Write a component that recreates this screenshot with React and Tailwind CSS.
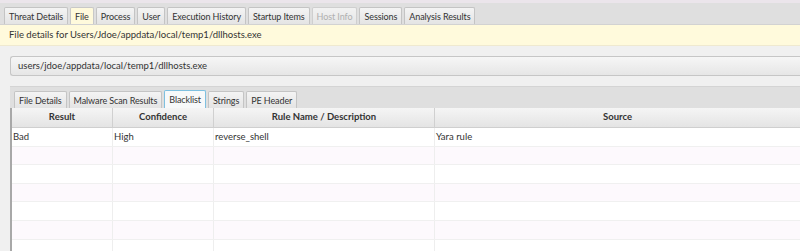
import React from "react";

const topTabs = [
  { label: "Threat Details" },
  { label: "File", selected: true },
  { label: "Process" },
  { label: "User" },
  { label: "Execution History" },
  { label: "Startup Items" },
  { label: "Host Info", disabled: true },
  { label: "Sessions" },
  { label: "Analysis Results" },
];

const innerTabs = [
  { label: "File Details" },
  { label: "Malware Scan Results" },
  { label: "Blacklist", selected: true },
  { label: "Strings" },
  { label: "PE Header" },
];

const rows = [
  ["Bad", "High", "reverse_shell", "Yara rule"],
  ["", "", "", ""],
  ["", "", "", ""],
  ["", "", "", ""],
  ["", "", "", ""],
  ["", "", "", ""],
  ["", "", "", ""],
];

function Tab({ label, selected, disabled, variant }) {
  let cls =
    "h-[17px] px-[4px] flex items-center border border-b-0 rounded-t-[2px] leading-none whitespace-nowrap text-[9px] tracking-[-0.1px] ";
  if (selected && variant === "top") {
    cls += "bg-[#fffadc] border-[#c8c8c8] text-[#333]";
  } else if (selected) {
    cls += "bg-[#f7f9fa] border-[#7ec0e0] text-[#333] h-[18px]";
  } else if (disabled) {
    cls += "bg-gradient-to-b from-[#f2f2f2] to-[#e6e6e6] border-[#cfcfcf] text-[#b0b0b0]";
  } else {
    cls += "bg-gradient-to-b from-[#f4f4f4] to-[#e4e4e4] border-[#c4c4c4] text-[#333]";
  }
  return <div className={cls}>{label}</div>;
}

export default function App() {
  return (
    <div
      className="w-[800px] h-[251px] overflow-hidden bg-[#f0f0f0] text-[9.5px] text-[#333]"
      style={{ fontFamily: "Lato, 'Noto Sans', sans-serif" }}
    >
      <div className="h-[3px] bg-[#ebe5eb]" />
      <div className="h-[22px] bg-[#dfdfdf] flex items-end gap-[2px] pl-[4px] border-b border-[#d2d2d2]">
        {topTabs.map((t) => (
          <Tab key={t.label} {...t} variant="top" />
        ))}
      </div>
      <div className="h-[21px] bg-[#fffadc] flex items-center pl-[9px] border-b border-[#efe9d0]">
        File details for Users/Jdoe/appdata/local/temp1/dllhosts.exe
      </div>
      <div className="pl-[10px] pt-[10px]">
        <div className="h-[20px] flex items-center pl-[7px] border border-r-0 border-[#c6c6c6] rounded-l-[3px] bg-gradient-to-b from-[#f6f6f6] to-[#e6e6e6]">
          users/jdoe/appdata/local/temp1/dllhosts.exe
        </div>
        <div className="mt-[10px] h-[22px] bg-[#dfdfdf] border-t border-[#d4d4d4] flex items-end gap-[2px] pl-[4px]">
          {innerTabs.map((t) => (
            <Tab key={t.label} {...t} variant="inner" />
          ))}
        </div>
        <div className="border-l-2 border-[#a8a8a8] bg-white">
          <div className="flex h-[20px] font-bold bg-gradient-to-b from-[#f5f5f5] to-[#e4e4e4] border-b border-[#cfcfcf]">
            <div className="w-[101px] flex items-center justify-center border-r border-[#d0d0d0]">Result</div>
            <div className="w-[101px] flex items-center justify-center border-r border-[#d0d0d0]">Confidence</div>
            <div className="w-[221px] flex items-center justify-center border-r border-[#d0d0d0]">Rule Name / Description</div>
            <div className="flex-1 flex items-center justify-center">Source</div>
          </div>
          {rows.map((r, i) => (
            <div
              key={i}
              className={
                "flex h-[18.6px] border-b border-[#f0f0f0] " +
                (i % 2 === 0 ? "bg-white" : "bg-[#fdf9fd]")
              }
            >
              <div className="w-[101px] flex items-center pl-[1px] border-r border-[#eeeeee]">{r[0]}</div>
              <div className="w-[101px] flex items-center pl-[1px] border-r border-[#eeeeee]">{r[1]}</div>
              <div className="w-[221px] flex items-center pl-[1px] border-r border-[#eeeeee]">{r[2]}</div>
              <div className="flex-1 flex items-center pl-[1px]">{r[3]}</div>
            </div>
          ))}
        </div>
      </div>
    </div>
  );
}
